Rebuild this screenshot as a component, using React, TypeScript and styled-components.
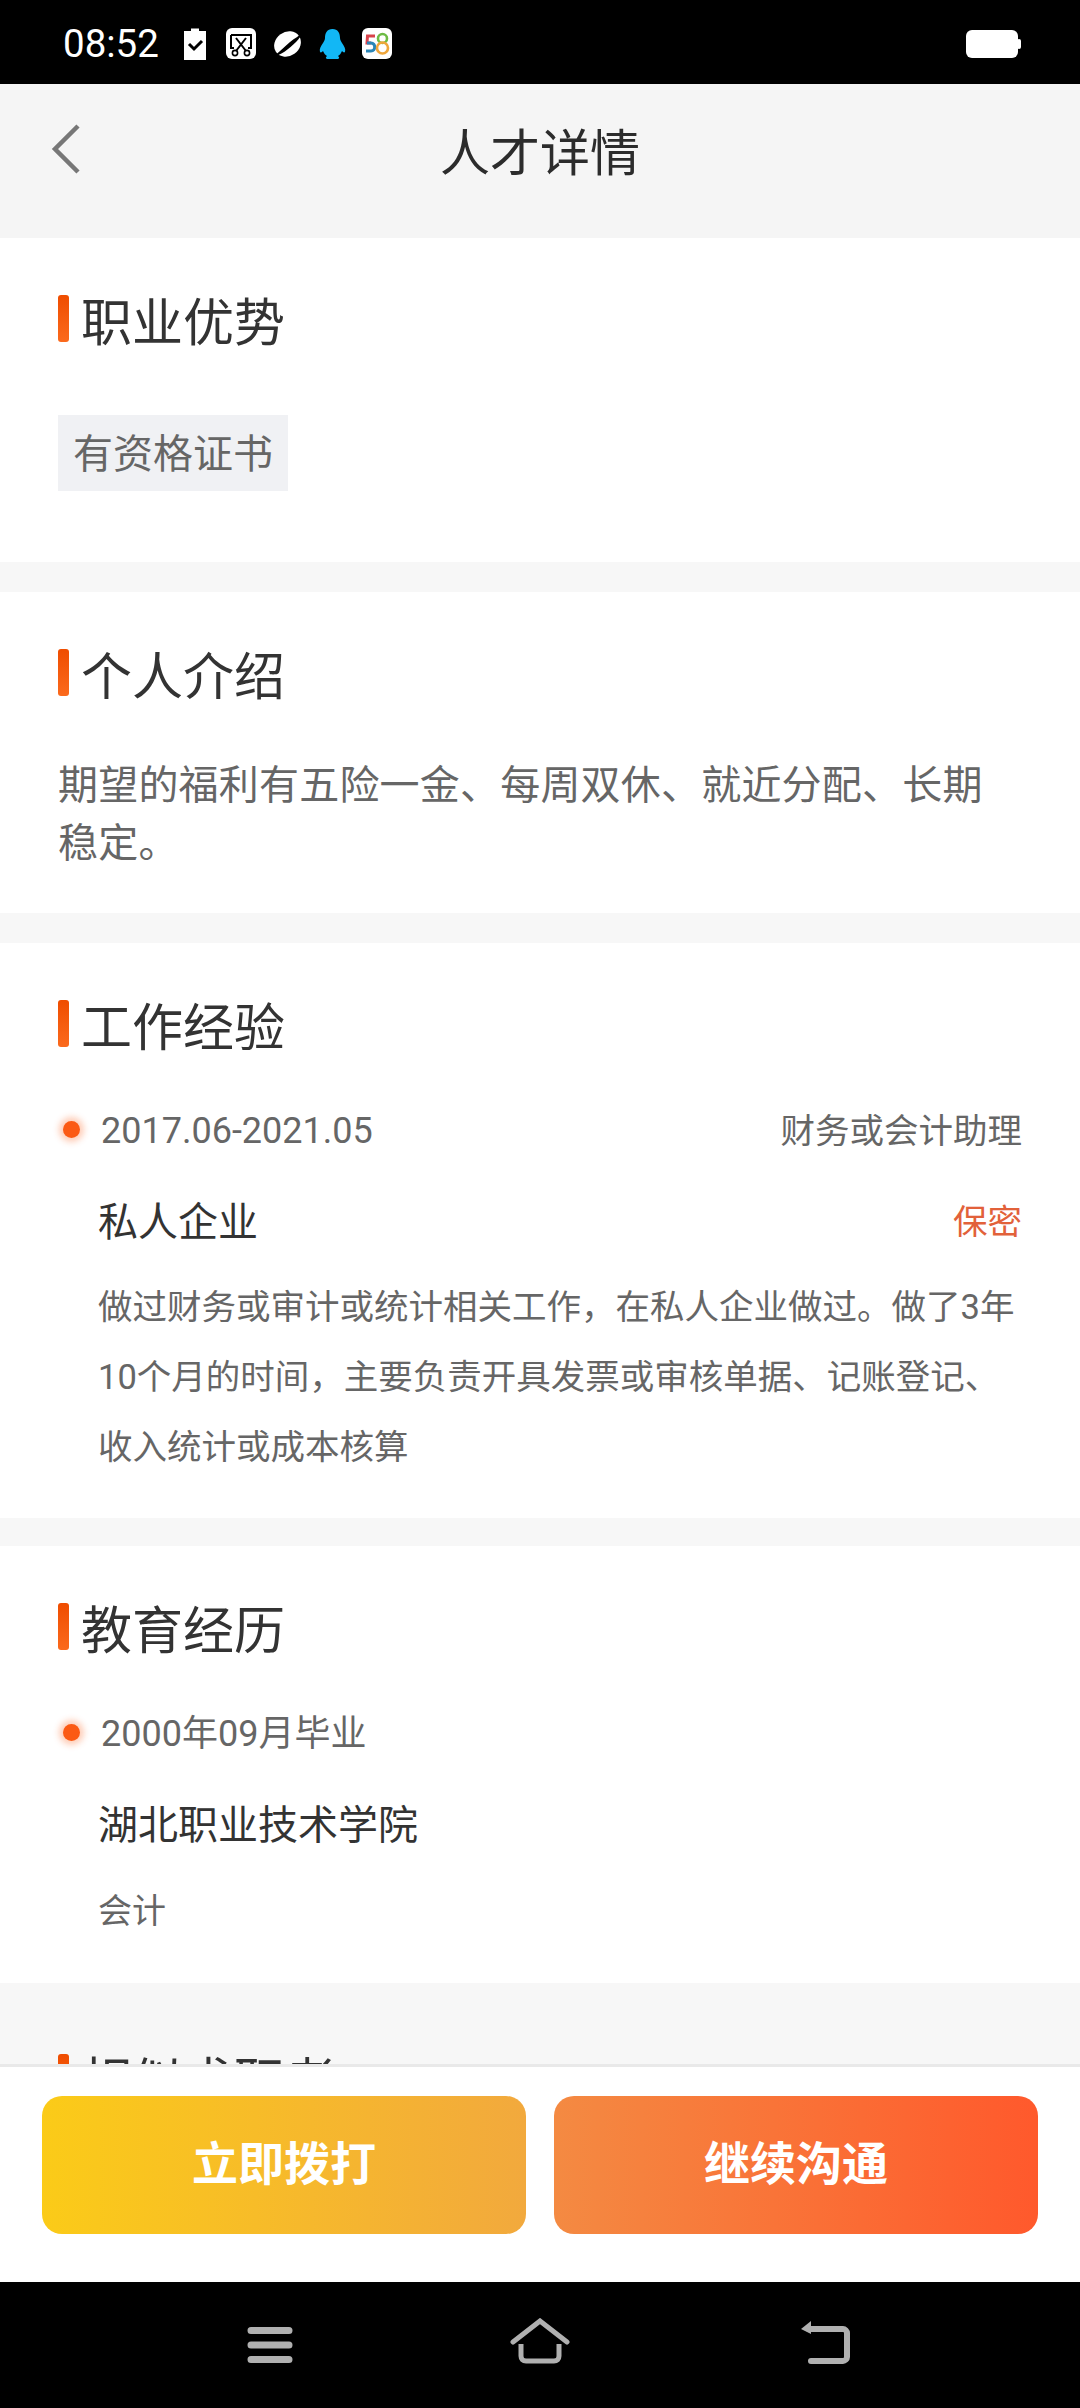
import styled, { createGlobalStyle } from 'styled-components';

const GlobalStyle = createGlobalStyle`
  html, body {
    margin: 0;
    padding: 0;
    background: #000;
  }
  * {
    box-sizing: border-box;
  }
`;

const Page = styled.div`
  display: flex;
  flex-direction: column;
  width: 1080px;
  height: 2408px;
  overflow: hidden;
  background: #f7f7f7;
  font-family: Roboto, 'Noto Sans CJK SC', sans-serif;
  color: #333;
`;

const StatusBar = styled.div`
  display: flex;
  align-items: center;
  flex: none;
  height: 84px;
  padding: 3px 59px 0 63px;
  background: #000;
`;

const Clock = styled.span`
  margin-right: 25px;
  font-size: 38.5px;
  line-height: 44px;
  color: #fff;
`;

const StatusIcons = styled.div`
  display: flex;
  flex: 1;
  align-items: center;
  gap: 16px;
`;

const Header = styled.header`
  position: relative;
  display: flex;
  align-items: center;
  justify-content: center;
  flex: none;
  height: 154px;
  padding-bottom: 14px;
  background: #f5f5f5;
`;

const BackButton = styled.div`
  position: absolute;
  left: 50px;
  top: 39px;
  display: flex;
`;

const HeaderTitle = styled.h1`
  margin: 0;
  font-size: 50px;
  font-weight: 400;
  line-height: 60px;
  color: #2c2c2c;
`;

const Content = styled.main`
  flex: 1;
  min-height: 0;
  overflow: hidden;
`;

const Section = styled.section<{ $height: number; $gap: number }>`
  height: ${(props) => props.$height}px;
  margin-bottom: ${(props) => props.$gap}px;
  padding: 52px 58px 0;
  background: #fff;
`;

const PeekSection = styled.section`
  padding: 66px 58px 0;
`;

const SectionTitle = styled.h2`
  display: flex;
  align-items: center;
  gap: 12px;
  height: 60px;
  margin: 0;
  padding-top: 8px;
  font-size: 51px;
  font-weight: 400;
  line-height: 60px;
  color: #333;

  &::before {
    content: '';
    width: 11px;
    height: 47px;
    margin-top: -12px;
    border-radius: 3px;
    background: linear-gradient(180deg, #ef4d00, #fb6a1d);
  }
`;

const Tag = styled.div`
  display: inline-block;
  height: 76px;
  margin-top: 65px;
  padding: 0 15px;
  font-size: 40px;
  line-height: 80px;
  color: #666;
  background: #f0f1f4;
`;

const BodyText = styled.p`
  max-width: 940px;
  margin: 53px 0 0;
  font-size: 40px;
  letter-spacing: 0.2px;
  line-height: 58px;
  color: #666;
`;

const TimelineRow = styled.div`
  display: flex;
  align-items: center;
  justify-content: space-between;
  height: 50px;
  margin-top: 51px;
`;

const TimelineDate = styled.div`
  display: flex;
  align-items: center;
  gap: 21px;
  font-size: 36px;
  line-height: 50px;
  color: #666;

  &::before {
    content: '';
    width: 17px;
    height: 17px;
    margin: -4px 0 0 5px;
    border-radius: 50%;
    background: #fb5a14;
    box-shadow: 0 0 6px 4px rgba(251, 90, 20, 0.3);
  }
`;

const Role = styled.span`
  font-size: 34.5px;
  line-height: 50px;
  color: #666;
`;

const CompanyRow = styled.div`
  display: flex;
  align-items: center;
  justify-content: space-between;
  height: 56px;
  margin: 35px 0 0 40px;
`;

const CompanyName = styled.span`
  font-size: 40px;
  color: #333;
`;

const Salary = styled.span`
  font-size: 34.5px;
  color: #e2613a;
`;

const Description = styled.p`
  margin: 25px 0 0 40px;
  font-size: 34.5px;
  line-height: 70px;
  color: #666;
`;

const Major = styled.div`
  margin: 36px 0 0 40px;
  font-size: 34px;
  line-height: 50px;
  color: #666;
`;

const ActionBar = styled.div`
  display: flex;
  flex: none;
  gap: 28px;
  height: 218px;
  padding: 29px 42px 0;
  border-top: 3px solid #e9e9e9;
  background: #fff;
`;

const ActionButton = styled.button<{ $from: string; $to: string }>`
  flex: 1;
  height: 138px;
  padding: 0 0 10px;
  border: 0;
  border-radius: 20px;
  font-family: inherit;
  font-size: 46px;
  font-weight: 700;
  color: #fff;
  background: linear-gradient(90deg, ${(props) => props.$from}, ${(props) => props.$to});
`;

const NavBar = styled.nav`
  display: flex;
  align-items: flex-start;
  flex: none;
  height: 126px;
  padding: 36px 0 0 246px;
  background: #000;
`;

const NavSlot = styled.div<{ $width: number }>`
  display: flex;
  align-items: flex-end;
  width: ${(props) => props.$width}px;
  height: 46px;
`;

function StatusGlyphs() {
  return (
    <StatusIcons>
      <svg width="26" height="32" viewBox="0 0 26 32">
        <path d="M0 3h7V0.5h8V3h7v29H0z" fill="#fff" />
        <path d="M5 16l5 5 8-8" fill="none" stroke="#000" strokeWidth="3" />
      </svg>
      <svg width="30" height="32" viewBox="0 0 30 32">
        <rect width="30" height="31" rx="6" fill="#fff" />
        <path d="M5 7h20v13h-3M5 7v13h3" fill="none" stroke="#000" strokeWidth="2" />
        <path d="M10 10l10 13M20 10L10 23" stroke="#000" strokeWidth="2" />
        <circle cx="9" cy="25" r="2.6" fill="#fff" stroke="#000" strokeWidth="1.6" />
        <circle cx="21" cy="25" r="2.6" fill="#fff" stroke="#000" strokeWidth="1.6" />
      </svg>
      <svg width="31" height="28" viewBox="0 0 31 28">
        <ellipse cx="15.5" cy="14" rx="14" ry="12" fill="#fff" transform="rotate(-35 15.500 14)" />
        <path d="M1 27C9 25 17 19 24 12c3-3 5-6 6-9-3 3-7 5-12 9C12 17 6 23 1 27z" fill="#000" />
      </svg>
      <svg width="27" height="30" viewBox="0 0 27 30">
        <path
          d="M13.5 0C8 0 6 4 6 9c0 2-1 3-2 5-2 3-4 6-3 9 1 1 2 0 3-1 1 2 2 4 4 5-1 1-2 2 0 3h11c2-1 1-2 0-3 2-1 3-3 4-5 1 1 2 2 3 1 1-3-1-6-3-9-1-2-2-3-2-5 0-5-2-9-7.500-9z"
          fill="#12b7f5"
        />
      </svg>
      <svg width="30" height="31" viewBox="0 0 30 31">
        <rect width="30" height="31" rx="6" fill="#fff" />
        <path d="M13 8H5.500l-0.500 7h4" fill="none" stroke="#d8434b" strokeWidth="3" />
        <path d="M5 15h4c5 0 5 8 0 8H4" fill="none" stroke="#2a86b8" strokeWidth="3" />
        <circle cx="20.500" cy="10.500" r="4.500" fill="none" stroke="#6dbb45" strokeWidth="2.600" />
        <circle cx="20.500" cy="20" r="5.500" fill="none" stroke="#f0a63a" strokeWidth="2.600" />
      </svg>
    </StatusIcons>
  );
}

function App() {
  return (
    <Page>
      <GlobalStyle />
      <StatusBar>
        <Clock>08:52</Clock>
        <StatusGlyphs />
        <svg width="55" height="28" viewBox="0 0 55 28">
          <rect width="52" height="28" rx="6" fill="#fff" />
          <rect x="51" y="9" width="4" height="10" rx="2" fill="#fff" />
        </svg>
      </StatusBar>
      <Header>
        <BackButton>
          <svg width="32" height="52" viewBox="0 0 32 52">
            <path d="M28 3L5 26l23 23" fill="none" stroke="#777" strokeWidth="4.500" />
          </svg>
        </BackButton>
        <HeaderTitle>人才详情</HeaderTitle>
      </Header>
      <Content>
        <Section $height={324} $gap={30}>
          <SectionTitle>职业优势</SectionTitle>
          <Tag>有资格证书</Tag>
        </Section>
        <Section $height={321} $gap={30}>
          <SectionTitle>个人介绍</SectionTitle>
          <BodyText>期望的福利有五险一金、每周双休、就近分配、长期稳定。</BodyText>
        </Section>
        <Section $height={575} $gap={28}>
          <SectionTitle>工作经验</SectionTitle>
          <TimelineRow>
            <TimelineDate>2017.06-2021.05</TimelineDate>
            <Role>财务或会计助理</Role>
          </TimelineRow>
          <CompanyRow>
            <CompanyName>私人企业</CompanyName>
            <Salary>保密</Salary>
          </CompanyRow>
          <Description>
            做过财务或审计或统计相关工作，在私人企业做过。做了3年10个月的时间，主要负责开具发票或审核单据、记账登记、收入统计或成本核算
          </Description>
        </Section>
        <Section $height={437} $gap={0}>
          <SectionTitle>教育经历</SectionTitle>
          <TimelineRow>
            <TimelineDate>2000年09月毕业</TimelineDate>
          </TimelineRow>
          <CompanyRow>
            <CompanyName>湖北职业技术学院</CompanyName>
          </CompanyRow>
          <Major>会计</Major>
        </Section>
        <PeekSection>
          <SectionTitle>相似求职者</SectionTitle>
        </PeekSection>
      </Content>
      <ActionBar>
        <ActionButton $from="#fbcb18" $to="#f2a93d">
          立即拨打
        </ActionButton>
        <ActionButton $from="#f48a42" $to="#ff592c">
          继续沟通
        </ActionButton>
      </ActionBar>
      <NavBar>
        <NavSlot $width={264}>
          <svg width="48" height="38" viewBox="0 0 48 38">
            <path d="M5 4.500h38M5 19h38M5 33.500h38" stroke="#b0b0b0" strokeWidth="7" strokeLinecap="round" />
          </svg>
        </NavSlot>
        <NavSlot $width={290}>
          <svg width="60" height="46" viewBox="0 0 60 46">
            <path d="M3 24L30 3l27 21" fill="none" stroke="#b0b0b0" strokeWidth="5" strokeLinecap="round" />
            <path d="M11 26v12c0 3 2 5 5 5h28c3 0 5-2 5-5V26" fill="none" stroke="#b0b0b0" strokeWidth="5" />
          </svg>
        </NavSlot>
        <NavSlot $width={50}>
          <svg width="50" height="44" viewBox="0 0 50 44">
            <path d="M9 9h34c2 0 4 2 4 4v24c0 2-2 4-4 4H11" fill="none" stroke="#b0b0b0" strokeWidth="6" strokeLinecap="round" />
            <path d="M11 1L1 9l10 5z" fill="#b0b0b0" />
          </svg>
        </NavSlot>
      </NavBar>
    </Page>
  );
}

export default App;
